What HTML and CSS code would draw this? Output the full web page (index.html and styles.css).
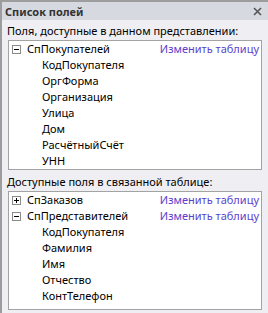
FILE: index.html
```html
<!DOCTYPE html>
<html>
<head>
    <meta charset="UTF-8" />
    <title>Список полей</title>
    <link rel="stylesheet" href="styles.css">
</head>
<body>
    <div class="panel">
        <div class="head">
            <span class="title">Список полей</span>
            <svg class="close" width="9" height="9" viewBox="0 0 9 9">
                <path d="M1 1 L8 8 M8 1 L1 8" stroke="#555" stroke-width="1.6" />
            </svg>
        </div>

        <div class="label first">Поля, доступные в данном представлении:</div>
        <div class="box">
            <div class="row top">
                <span class="tog minus"></span>
                <span class="name">СпПокупателей</span>
                <a href="#" class="edit">Изменить таблицу</a>
            </div>
            <div class="row child">КодПокупателя</div>
            <div class="row child">ОргФорма</div>
            <div class="row child">Организация</div>
            <div class="row child">Улица</div>
            <div class="row child">Дом</div>
            <div class="row child">РасчётныйСчёт</div>
            <div class="row child">УНН</div>
        </div>

        <div class="label second">Доступные поля в связанной таблице:</div>
        <div class="box grow">
            <div class="row top">
                <span class="tog plus"></span>
                <span class="name">СпЗаказов</span>
                <a href="#" class="edit">Изменить таблицу</a>
            </div>
            <div class="row top">
                <span class="tog minus"></span>
                <span class="name">СпПредставителей</span>
                <a href="#" class="edit">Изменить таблицу</a>
            </div>
            <div class="row child">КодПокупателя</div>
            <div class="row child">Фамилия</div>
            <div class="row child">Имя</div>
            <div class="row child">Отчество</div>
            <div class="row child">КонтТелефон</div>
        </div>
    </div>
</body>
</html>
```

FILE: styles.css
```css
* {
    margin: 0;
    padding: 0;
    box-sizing: border-box;
}
html, body {
    height: 100%;
}
body {
    font-family: "Noto Sans", "DejaVu Sans", sans-serif;
    font-size: 11px;
    color: #000;
    background-color: #eeeef3;
}

.panel {
    height: 313px;
    display: flex;
    flex-direction: column;
    border-left: 2px solid #9d9d9d;
    border-top: 2px solid #9d9d9d;
    background-color: #eeeef3;
}

.head {
    height: 18px;
    background-color: #d6d9e0;
    display: flex;
    align-items: center;
    justify-content: space-between;
    padding: 0 6px 0 3px;
}
.title {
    font-weight: bold;
    color: #333;
}

.label {
    padding-left: 5px;
    line-height: 18px;
}
.label.first {
    margin-top: 2px;
}
.label.second {
    padding-top: 3px;
}

.box {
    margin: 0 6px;
    background-color: #fff;
    border: 1px solid #a3a3a3;
}
.box.grow {
    flex: 1;
    margin-bottom: 3px;
}

.row {
    height: 16px;
    line-height: 16px;
    display: flex;
    align-items: center;
    white-space: nowrap;
}
.row.top {
    padding: 0 2px 0 3px;
}
.row.child {
    padding-left: 33px;
}

.tog {
    width: 9px;
    height: 9px;
    border: 1px solid #8a8a8a;
    position: relative;
    margin-right: 6px;
    flex: none;
}
.tog::before {
    content: "";
    position: absolute;
    left: 1px;
    top: 3px;
    width: 5px;
    height: 1px;
    background-color: #000;
}
.tog.plus::after {
    content: "";
    position: absolute;
    left: 3px;
    top: 1px;
    width: 1px;
    height: 5px;
    background-color: #000;
}

.name {
    flex: 1;
}
.edit {
    color: #5b3fcc;
    text-decoration: none;
}
```
